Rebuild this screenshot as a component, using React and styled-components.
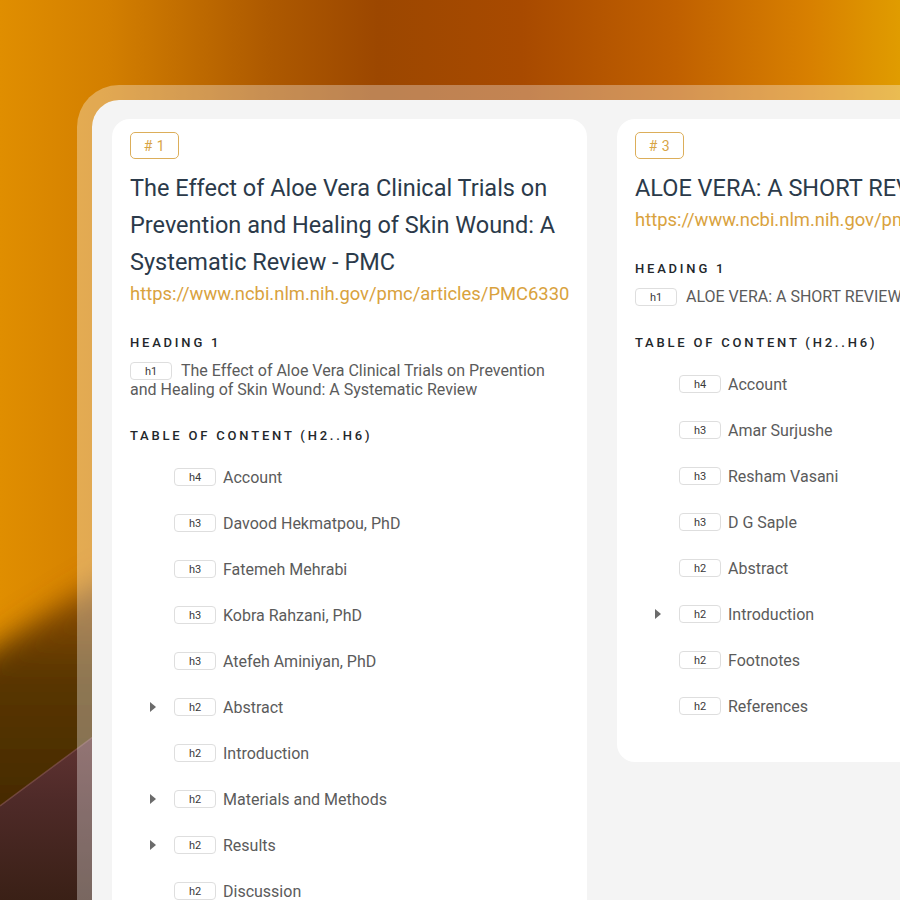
import React from 'react'
import styled, { createGlobalStyle } from 'styled-components'

const GlobalStyle = createGlobalStyle`
  html, body {
    margin: 0;
    padding: 0;
    width: 900px;
    height: 900px;
    overflow: hidden;
  }
  body {
    font-family: Roboto, "Liberation Sans", sans-serif;
    -webkit-font-smoothing: antialiased;
  }
`

const cards = [
  {
    id: 1,
    title: 'The Effect of Aloe Vera Clinical Trials on Prevention and Healing of Skin Wound: A Systematic Review - PMC',
    url: 'https://www.ncbi.nlm.nih.gov/pmc/articles/PMC6330525/',
    h1: 'The Effect of Aloe Vera Clinical Trials on Prevention and Healing of Skin Wound: A Systematic Review',
    toc: [
      { tag: 'h4', text: 'Account' },
      { tag: 'h3', text: 'Davood Hekmatpou, PhD' },
      { tag: 'h3', text: 'Fatemeh Mehrabi' },
      { tag: 'h3', text: 'Kobra Rahzani, PhD' },
      { tag: 'h3', text: 'Atefeh Aminiyan, PhD' },
      { tag: 'h2', text: 'Abstract', more: true },
      { tag: 'h2', text: 'Introduction' },
      { tag: 'h2', text: 'Materials and Methods', more: true },
      { tag: 'h2', text: 'Results', more: true },
      { tag: 'h2', text: 'Discussion' },
      { tag: 'h2', text: 'Conclusion' },
      { tag: 'h2', text: 'References' },
    ],
  },
  {
    id: 3,
    title: 'ALOE VERA: A SHORT REVIEW',
    url: 'https://www.ncbi.nlm.nih.gov/pmc/articles/PMC2763764/',
    h1: 'ALOE VERA: A SHORT REVIEW',
    toc: [
      { tag: 'h4', text: 'Account' },
      { tag: 'h3', text: 'Amar Surjushe' },
      { tag: 'h3', text: 'Resham Vasani' },
      { tag: 'h3', text: 'D G Saple' },
      { tag: 'h2', text: 'Abstract' },
      { tag: 'h2', text: 'Introduction', more: true },
      { tag: 'h2', text: 'Footnotes' },
      { tag: 'h2', text: 'References' },
    ],
  },
]

function Wallpaper() {
  return (
    <WallSvg viewBox="0 0 900 900" preserveAspectRatio="none">
      <defs>
        <linearGradient id="sky" x1="0" y1="0" x2="1" y2="0">
          <stop offset="0" stopColor="#e08e00" />
          <stop offset="0.12" stopColor="#d37f00" />
          <stop offset="0.3" stopColor="#ad5900" />
          <stop offset="0.42" stopColor="#9c4700" />
          <stop offset="0.58" stopColor="#a84a00" />
          <stop offset="0.75" stopColor="#c06000" />
          <stop offset="0.9" stopColor="#d88000" />
          <stop offset="1" stopColor="#e09c00" />
        </linearGradient>
        <linearGradient id="dune" x1="0" y1="0" x2="0" y2="1">
          <stop offset="0" stopColor="#a85a00" />
          <stop offset="0.3" stopColor="#5a3600" />
          <stop offset="1" stopColor="#2e1d04" />
        </linearGradient>
        <linearGradient id="wave" x1="0" y1="0" x2="0" y2="1">
          <stop offset="0" stopColor="#6a3838" />
          <stop offset="0.5" stopColor="#4e2a28" />
          <stop offset="1" stopColor="#3a2016" />
        </linearGradient>
        <filter id="soft" x="-20%" y="-20%" width="140%" height="140%">
          <feGaussianBlur stdDeviation="14" />
        </filter>
      </defs>
      <rect x="0" y="0" width="900" height="900" fill="url(#sky)" />
      <path d="M-40 670 C 20 630, 80 590, 160 550 L 200 550 L 200 960 L -40 960 Z" fill="url(#dune)" filter="url(#soft)" />
      <path d="M0 806 L 140 702 L 140 900 L 0 900 Z" fill="url(#wave)" />
      <path d="M0 806 L 140 702" stroke="#8a5a58" strokeWidth="1.5" fill="none" opacity="0.6" />
    </WallSvg>
  )
}

function TocRow({ item }) {
  return (
    <Row>
      <Caret>{item.more && <Arrow />}</Caret>
      <Tag>{item.tag}</Tag>
      <RowText>{item.text}</RowText>
    </Row>
  )
}

function Card({ data }) {
  return (
    <CardBox>
      <Badge># {data.id}</Badge>
      <Title>{data.title}</Title>
      <Url>{data.url}</Url>
      <Label>Heading 1</Label>
      <H1Line>
        <InlineTag>h1</InlineTag>
        {data.h1}
      </H1Line>
      <Label>Table of content (H2..H6)</Label>
      <TocList>
        {data.toc.map((item, i) => (
          <TocRow key={i} item={item} />
        ))}
      </TocList>
    </CardBox>
  )
}

export default function App() {
  return (
    <Stage>
      <GlobalStyle />
      <Wallpaper />
      <Frame>
        <Board>
          {cards.map((c) => (
            <Card key={c.id} data={c} />
          ))}
        </Board>
      </Frame>
    </Stage>
  )
}

const Stage = styled.div`
  position: relative;
  width: 900px;
  height: 900px;
  overflow: hidden;
  padding: 85px 0 0 77px;
  box-sizing: border-box;
`

const WallSvg = styled.svg`
  position: absolute;
  inset: 0;
  width: 900px;
  height: 900px;
  display: block;
`

const Frame = styled.div`
  position: relative;
  width: 1100px;
  min-height: 1000px;
  border: 15px solid rgba(255, 255, 255, 0.32);
  border-right: none;
  border-bottom: none;
  border-radius: 42px 0 0 0;
  background: #f4f4f4;
  background-clip: padding-box;
  padding: 19px 0 0 20px;
  box-sizing: border-box;
`

const Board = styled.div`
  display: flex;
  align-items: flex-start;
  gap: 30px;
`

const CardBox = styled.div`
  flex: 0 0 475px;
  width: 475px;
  box-sizing: border-box;
  background: #ffffff;
  border-radius: 18px;
  padding: 13px 18px 33px;
  overflow: hidden;
`

const Badge = styled.div`
  display: inline-flex;
  align-items: center;
  justify-content: center;
  width: 49px;
  height: 27px;
  box-sizing: border-box;
  border: 1.5px solid #dcae5a;
  border-radius: 5px;
  color: #d7a446;
  font-size: 14px;
  letter-spacing: 0.5px;
`

const Title = styled.div`
  margin-top: 11px;
  font-size: 23.5px;
  line-height: 37px;
  color: #2b3a4a;
`

const Url = styled.div`
  font-size: 18.4px;
  line-height: 25px;
  color: #d9a23d;
  white-space: nowrap;
  overflow: hidden;
`

const Label = styled.div`
  font-size: 13px;
  line-height: 16px;
  font-weight: 500;
  letter-spacing: 2.8px;
  text-transform: uppercase;
  color: #23272b;
  margin-top: 29px;

  & + div {
    margin-top: 10px;
  }
`

const H1Line = styled.div`
  font-size: 16px;
  line-height: 19px;
  color: #5b5b5b;
`

const Tag = styled.span`
  display: inline-flex;
  align-items: center;
  justify-content: center;
  width: 42px;
  height: 18px;
  box-sizing: border-box;
  border: 1px solid #dedede;
  border-radius: 4px;
  font-size: 11px;
  line-height: 1;
  color: #3a3a3a;
  flex: 0 0 auto;
`

const InlineTag = styled(Tag)`
  vertical-align: top;
  margin-top: 1px;
  margin-right: 9px;
`

const TocList = styled.div`
  display: flex;
  flex-direction: column;
`

const Row = styled.div`
  display: flex;
  align-items: center;
  height: 46px;
`

const Caret = styled.span`
  display: flex;
  align-items: center;
  justify-content: flex-start;
  width: 44px;
  padding-left: 20px;
  box-sizing: border-box;
`

const Arrow = styled.span`
  width: 0;
  height: 0;
  border-left: 6.5px solid #6b6b6b;
  border-top: 5px solid transparent;
  border-bottom: 5px solid transparent;
`

const RowText = styled.span`
  margin-left: 7px;
  font-size: 16px;
  color: #5b5b5b;
  white-space: nowrap;
`
